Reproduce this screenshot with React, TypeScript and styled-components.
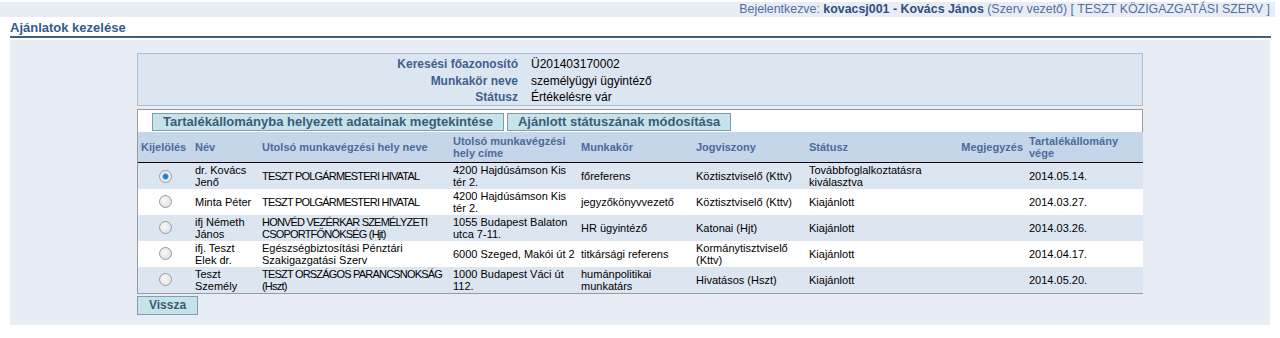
import React from "react";
import styled, { createGlobalStyle } from "styled-components";

const GlobalStyle = createGlobalStyle`
  body {
    margin: 0;
    background: #ffffff;
    font-family: "Liberation Sans", Arial, sans-serif;
    font-size: 11px;
    color: #000;
  }
`;

type Offer = {
  name: string;
  place: string;
  address: string;
  job: string;
  relation: string;
  status: string;
  note: string;
  end: string;
  selected?: boolean;
};

const offers: Offer[] = [
  {
    name: "dr. Kovács Jenő",
    place: "TESZT POLGÁRMESTERI HIVATAL",
    address: "4200 Hajdúsámson Kis tér 2.",
    job: "főreferens",
    relation: "Köztisztviselő (Kttv)",
    status: "Továbbfoglalkoztatásra kiválasztva",
    note: "",
    end: "2014.05.14.",
    selected: true,
  },
  {
    name: "Minta Péter",
    place: "TESZT POLGÁRMESTERI HIVATAL",
    address: "4200 Hajdúsámson Kis tér 2.",
    job: "jegyzőkönyvvezető",
    relation: "Köztisztviselő (Kttv)",
    status: "Kiajánlott",
    note: "",
    end: "2014.03.27.",
  },
  {
    name: "ifj Németh János",
    place: "HONVÉD VEZÉRKAR SZEMÉLYZETI CSOPORTFŐNÖKSÉG (Hjt)",
    address: "1055 Budapest Balaton utca 7-11.",
    job: "HR ügyintéző",
    relation: "Katonai (Hjt)",
    status: "Kiajánlott",
    note: "",
    end: "2014.03.26.",
  },
  {
    name: "ifj. Teszt Elek dr.",
    place: "Egészségbiztosítási Pénztári Szakigazgatási Szerv",
    address: "6000 Szeged, Makói út 2",
    job: "titkársági referens",
    relation: "Kormánytisztviselő (Kttv)",
    status: "Kiajánlott",
    note: "",
    end: "2014.04.17.",
  },
  {
    name: "Teszt Személy",
    place: "TESZT ORSZÁGOS PARANCSNOKSÁG (Hszt)",
    address: "1000 Budapest Váci út 112.",
    job: "humánpolitikai munkatárs",
    relation: "Hivatásos (Hszt)",
    status: "Kiajánlott",
    note: "",
    end: "2014.05.20.",
  },
];

const columns = [
  { label: "Kijelölés", width: 54 },
  { label: "Név", width: 67 },
  { label: "Utolsó munkavégzési hely neve", width: 191 },
  { label: "Utolsó munkavégzési hely címe", width: 128 },
  { label: "Munkakör", width: 115 },
  { label: "Jogviszony", width: 113 },
  { label: "Státusz", width: 136 },
  { label: "Megjegyzés", width: 84, right: true },
  { label: "Tartalékállomány vége", width: 117 },
];

// names written in capitals get tighter spacing
const isCaps = (s: string) => /^[A-ZÁÉÍÓÖŐÚÜŰ]{4,} /.test(s);

export default function App() {
  return (
    <>
      <GlobalStyle />
      <TopBar>
        Bejelentkezve: <b>kovacsj001 - Kovács János</b> (Szerv vezető) [ TESZT KÖZIGAZGATÁSI SZERV ]
      </TopBar>
      <Title>Ajánlatok kezelése</Title>
      <Panel>
        <InfoBox>
          <InfoLabel>Keresési főazonosító</InfoLabel>
          <InfoValue>Ü201403170002</InfoValue>
          <InfoLabel>Munkakör neve</InfoLabel>
          <InfoValue>személyügyi ügyintéző</InfoValue>
          <InfoLabel>Státusz</InfoLabel>
          <InfoValue>Értékelésre vár</InfoValue>
        </InfoBox>
        <GridBox>
          <ButtonStrip>
            <ActionButton>Tartalékállományba helyezett adatainak megtekintése</ActionButton>
            <ActionButton>Ajánlott státuszának módosítása</ActionButton>
          </ButtonStrip>
          <Table>
            <colgroup>
              {columns.map((c) => (
                <col key={c.label} style={{ width: c.width }} />
              ))}
            </colgroup>
            <thead>
              <tr>
                {columns.map((c) => (
                  <HeaderCell key={c.label} $right={!!c.right}>
                    {c.label}
                  </HeaderCell>
                ))}
              </tr>
            </thead>
            <tbody>
              {offers.map((o, i) => (
                <Row key={o.name} $shaded={i % 2 === 0}>
                  <Cell $center>
                    <Radio $checked={!!o.selected} />
                  </Cell>
                  <Cell>{o.name}</Cell>
                  <Cell $caps={isCaps(o.place)}>{o.place}</Cell>
                  <Cell>{o.address}</Cell>
                  <Cell>{o.job}</Cell>
                  <Cell>{o.relation}</Cell>
                  <Cell>{o.status}</Cell>
                  <Cell>{o.note}</Cell>
                  <Cell>{o.end}</Cell>
                </Row>
              ))}
            </tbody>
          </Table>
        </GridBox>
        <BackButton>Vissza</BackButton>
      </Panel>
    </>
  );
}

const TopBar = styled.div`
  margin-top: 2px;
  width: 1275px;
  height: 15px;
  box-sizing: border-box;
  padding-right: 5px;
  background: #e8edf5;
  text-align: right;
  font-size: 12.4px;
  line-height: 15px;
  color: #5070a0;

  b {
    color: #2f4f80;
  }
`;

const Title = styled.h1`
  margin: 4px 10px 0 10px;
  width: 1261px;
  font-size: 13px;
  line-height: 14px;
  font-weight: bold;
  color: #2f5c8f;
  border-bottom: 2px solid #3f5f8a;
  padding-bottom: 1px;
`;

const Panel = styled.div`
  margin: 2px 0 0 10px;
  width: 1260px;
  height: 285px;
  box-sizing: border-box;
  padding: 13px 0 0 127px;
  background: #e8edf5;
`;

const InfoBox = styled.div`
  width: 1006px;
  height: 53px;
  box-sizing: border-box;
  border: 1px solid #a9bfd6;
  background: #dce6f0;
  display: grid;
  grid-template-columns: 380px 1fr;
  column-gap: 13px;
  align-content: start;
  padding-top: 2px;
  font-size: 12px;
  line-height: 16.5px;
`;

const InfoLabel = styled.div`
  text-align: right;
  font-weight: bold;
  color: #3f5f8f;
`;

const InfoValue = styled.div`
  color: #000;
`;

const GridBox = styled.div`
  margin-top: 3px;
  width: 1006px;
  box-sizing: border-box;
  border: 1px solid #9a9a9a;
  background: #fff;
`;

const ButtonStrip = styled.div`
  display: flex;
  gap: 3px;
  padding: 3px 0 1px 14px;
`;

const ActionButton = styled.button`
  height: 18px;
  padding: 0 10px;
  background: #c6e3ea;
  border: 1px solid #7f9cb0;
  font-family: inherit;
  font-size: 13px;
  font-weight: bold;
  color: #3d5b76;
  line-height: 16px;
`;

const Table = styled.table`
  width: 1004px;
  table-layout: fixed;
  border-collapse: collapse;
`;

const HeaderCell = styled.th<{ $right: boolean }>`
  height: 30px;
  padding: 0 3px;
  background: #c5d6e8;
  border-bottom: 1px solid #000;
  text-align: ${({ $right }) => ($right ? "right" : "left")};
  vertical-align: middle;
  font-size: 11px;
  line-height: 12px;
  font-weight: bold;
  color: #4c6b9c;
`;

const Row = styled.tr<{ $shaded: boolean }>`
  height: 26px;
  background: ${({ $shaded }) => ($shaded ? "#dce6f0" : "#ffffff")};
`;

const Cell = styled.td<{ $center?: boolean; $caps?: boolean }>`
  padding: 0 3px;
  vertical-align: middle;
  text-align: ${({ $center }) => ($center ? "center" : "left")};
  font-size: 11px;
  line-height: 12px;
  letter-spacing: ${({ $caps }) => ($caps ? "-0.8px" : "normal")};
  color: #000;
`;

const Radio = styled.span<{ $checked: boolean }>`
  display: inline-block;
  width: 11px;
  height: 11px;
  border-radius: 50%;
  border: 1px solid #9a9a9a;
  background: ${({ $checked }) =>
    $checked
      ? "radial-gradient(circle, #1f6fb8 0, #3b8fd8 2.5px, #e8eef4 3.5px, #f4f4f4 100%)"
      : "radial-gradient(circle at 40% 40%, #f8f8f8 0, #dcdcdc 100%)"};
  vertical-align: middle;
`;

const BackButton = styled.button`
  margin-top: 2px;
  width: 61px;
  height: 19px;
  background: #c6e3ea;
  border: 1px solid #7f9cb0;
  font-family: inherit;
  font-size: 12px;
  font-weight: bold;
  color: #3d5b76;
  padding: 0;
`;
